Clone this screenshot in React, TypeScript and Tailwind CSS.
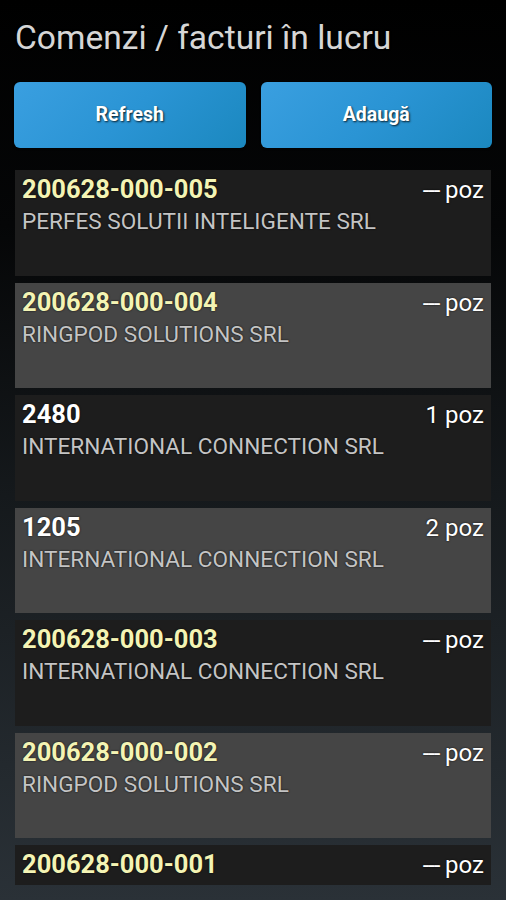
import React from "react";

type Row = { id: string; name?: string; poz: string; yellow: boolean };

const rows: Row[] = [
  { id: "200628-000-005", name: "PERFES SOLUTII INTELIGENTE SRL", poz: "---", yellow: true },
  { id: "200628-000-004", name: "RINGPOD SOLUTIONS SRL", poz: "---", yellow: true },
  { id: "2480", name: "INTERNATIONAL CONNECTION SRL", poz: "1", yellow: false },
  { id: "1205", name: "INTERNATIONAL CONNECTION SRL", poz: "2", yellow: false },
  { id: "200628-000-003", name: "INTERNATIONAL CONNECTION SRL", poz: "---", yellow: true },
  { id: "200628-000-002", name: "RINGPOD SOLUTIONS SRL", poz: "---", yellow: true },
  { id: "200628-000-001", poz: "---", yellow: true },
];

const shadow = "[text-shadow:0_0_2px_rgba(0,0,0,0.9)]";

export default function App() {
  return (
    <div
      className="w-[506px] h-[900px] overflow-hidden flex flex-col bg-[linear-gradient(180deg,#000000_0%,#050607_25%,#15191c_55%,#2a3137_100%)]"
      style={{ fontFamily: "Roboto, 'Liberation Sans', sans-serif" }}
    >
      <div className="px-[15px] pt-[16px] h-[82px]">
        <h1 className={`text-[33.6px] leading-[44px] text-[#d6d6d6] font-normal ${shadow}`}>
          Comenzi / facturi în lucru
        </h1>
      </div>
      <div className="px-[14px] flex gap-[15px]">
        <button className="flex-1 h-[66px] rounded-[6px] bg-[linear-gradient(135deg,#3a9fe0_0%,#2a94d4_50%,#1b88bf_100%)] text-white text-[19.5px] font-bold shadow-[0_1px_2px_rgba(0,0,0,0.6)] [text-shadow:1px_1px_2px_rgba(0,0,0,0.8)]">
          Refresh
        </button>
        <button className="flex-1 h-[66px] rounded-[6px] bg-[linear-gradient(135deg,#3a9fe0_0%,#2a94d4_50%,#1b88bf_100%)] text-white text-[19.5px] font-bold shadow-[0_1px_2px_rgba(0,0,0,0.6)] [text-shadow:1px_1px_2px_rgba(0,0,0,0.8)]">
          Adaugă
        </button>
      </div>
      <div className="mt-[22px] mx-[15px] h-[715px] overflow-hidden flex flex-col gap-[7px]">
        {rows.map((r, i) => (
          <div
            key={i}
            className={`shrink-0 ${r.name ? "h-[105.5px]" : "h-[40px]"} px-[7px] pt-[4px] ${i % 2 === 0 ? "bg-[#1d1d1d]" : "bg-[#454545]"}`}
          >
            <div className="flex items-baseline justify-between">
              <span
                className={`text-[25.5px] leading-[30px] font-bold ${r.yellow ? "text-[#f4f4b4]" : "text-white"} ${shadow}`}
              >
                {r.id}
              </span>
              <span className={`text-[24px] leading-[30px] text-white ${shadow}`}>
                {r.poz === "---" ? (
                  <span className="tracking-[-1.2px] mr-[6px]">---</span>
                ) : (
                  <span className="mr-[6px]">{r.poz}</span>
                )}
                poz
              </span>
            </div>
            {r.name && (
              <div className={`mt-[4px] text-[22.6px] leading-[26px] text-[#c4c4c4] ${shadow}`}>
                {r.name}
              </div>
            )}
          </div>
        ))}
      </div>
    </div>
  );
}
